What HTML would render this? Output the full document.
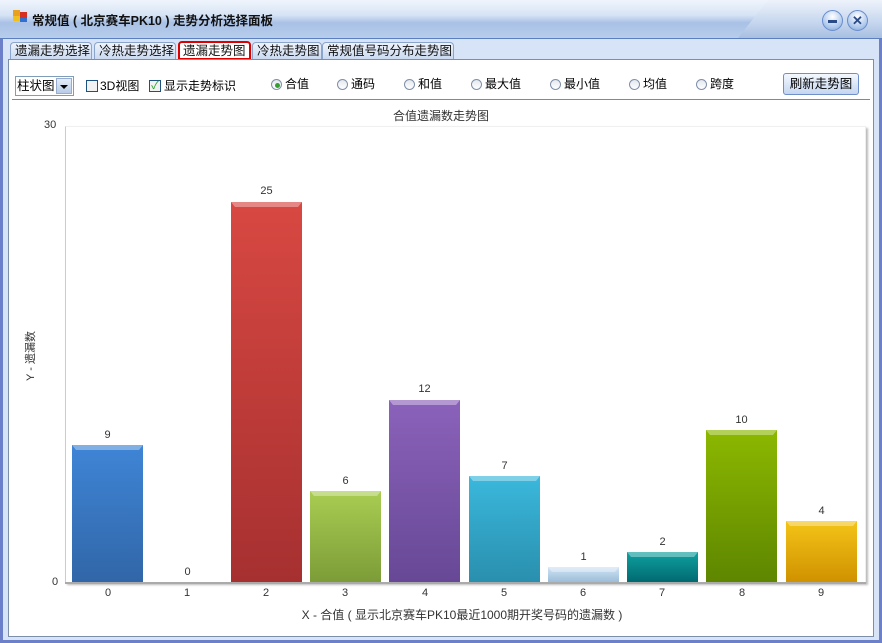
<!DOCTYPE html>
<html><head><meta charset="utf-8"><style>
*{margin:0;padding:0;box-sizing:border-box}
body{width:882px;height:643px;overflow:hidden;background:#d7e3f7;font-family:"Liberation Sans","Noto Sans CJK SC",sans-serif;font-size:12px;color:#000;position:relative}
.a{position:absolute;white-space:nowrap}
.frame{left:0;top:0;width:882px;height:643px;border:3px solid #6b80c8;border-top:none}
.title{left:0;top:0;width:882px;height:39px;background:linear-gradient(#f0f5fc 0%,#d6e3f5 40%,#a9c1e6 60%,#b7cdec 100%);border-bottom:1px solid #5c7fbf}
.tab{top:42px;height:18px;border:1px solid #8aa4cc;border-bottom:none;border-radius:4px 4px 0 0;background:linear-gradient(#eef3fb,#c8d8f0);font-size:12.5px;line-height:16px;padding:0 0 0 4px;color:#111;overflow:visible}
.panel{left:8px;top:59px;width:866px;height:578px;background:#fff;border:1px solid #7c8ea8}
.rad{width:11px;height:11px;border:1px solid #7f8fa8;border-radius:50%;background:linear-gradient(#e4e8ee,#fff)}
.lbl{font-size:12px;line-height:14px}
.bar{bottom:61px;width:71px}
.bar:before{content:"";position:absolute;left:0;top:0;right:0;height:5px;background:rgba(255,255,255,.35);clip-path:polygon(0 0,100% 0,calc(100% - 4px) 100%,4px 100%)}
.v{font-size:11px;width:71px;text-align:center;color:#333}
.xl{top:587px;font-size:11px;width:20px;text-align:center;color:#333}
</style></head><body>
<div class="a frame"></div>
<div class="a title"></div>
<div class="a" style="left:13px;top:10px;width:7px;height:6px;background:#e8a020"></div>
<div class="a" style="left:20px;top:12px;width:7px;height:6px;background:#d83020"></div>
<div class="a" style="left:13px;top:16px;width:7px;height:5px;background:#f0c020"></div>
<div class="a" style="left:20px;top:18px;width:7px;height:4px;background:#3070d0"></div>
<div class="a" style="left:32px;top:10px;font-size:12.5px;font-weight:bold;color:#111">常规值 ( 北京赛车PK10 ) 走势分析选择面板</div>
<div class="a" style="left:738px;top:0;width:144px;height:38px;background:linear-gradient(#eef3fb,#c5d6ee 60%,#a8bfe2);clip-path:polygon(30px 0,100% 0,100% 100%,0 100%)"></div>
<div class="a" style="left:822px;top:10px;width:21px;height:21px;border-radius:50%;border:1px solid #6a8ccc;background:radial-gradient(circle at 50% 30%,#fff,#a8c4ea 70%,#6f96d4)"></div>
<div class="a" style="left:828px;top:20px;width:9px;height:3px;background:#2a4a88"></div>
<div class="a" style="left:847px;top:10px;width:21px;height:21px;border-radius:50%;border:1px solid #6a8ccc;background:radial-gradient(circle at 50% 30%,#fff,#a8c4ea 70%,#6f96d4);font-size:13px;font-weight:bold;color:#2a4a88;text-align:center;line-height:19px">✕</div>
<div class="a tab" style="left:10px;width:82px">遗漏走势选择</div>
<div class="a tab" style="left:94px;width:82px">冷热走势选择</div>
<div class="a tab" style="left:178px;top:41px;width:73px;height:19px;background:#fff;border:2px solid #d00;padding-left:3px">遗漏走势图</div>
<div class="a tab" style="left:252px;width:70px">冷热走势图</div>
<div class="a tab" style="left:322px;width:132px">常规值号码分布走势图</div>
<div class="a panel"></div>
<div class="a" style="left:15px;top:76px;width:59px;height:20px;border:1px solid #7f9db9;background:#fff"></div>
<div class="a lbl" style="left:17px;top:79px;font-size:12.5px">柱状图</div>
<div class="a" style="left:56px;top:78px;width:16px;height:16px;background:linear-gradient(#e4ecf8,#b8cbe8);border:1px solid #98acd0"></div>
<div class="a" style="left:60px;top:85px;border:4px solid transparent;border-top:4px solid #000;border-bottom:none"></div>
<div class="a" style="left:86px;top:80px;width:12px;height:12px;border:1px solid #1c5180;background:#f2f2f2"></div>
<div class="a lbl" style="left:100px;top:79px">3D视图</div>
<div class="a" style="left:149px;top:80px;width:12px;height:12px;border:1px solid #1c5180;background:#f2f2f2;color:#21a121;font-size:11px;line-height:10px;text-align:center">✓</div>
<div class="a lbl" style="left:164px;top:79px">显示走势标识</div>
<div class="a rad" style="left:271px;top:79px"></div><div class="a" style="left:275px;top:83px;width:5px;height:5px;border-radius:50%;background:#31a031"></div><div class="a lbl" style="left:285px;top:77px">合值</div>
<div class="a rad" style="left:337px;top:79px"></div><div class="a lbl" style="left:351px;top:77px">通码</div>
<div class="a rad" style="left:404px;top:79px"></div><div class="a lbl" style="left:418px;top:77px">和值</div>
<div class="a rad" style="left:471px;top:79px"></div><div class="a lbl" style="left:485px;top:77px">最大值</div>
<div class="a rad" style="left:550px;top:79px"></div><div class="a lbl" style="left:564px;top:77px">最小值</div>
<div class="a rad" style="left:629px;top:79px"></div><div class="a lbl" style="left:643px;top:77px">均值</div>
<div class="a rad" style="left:696px;top:79px"></div><div class="a lbl" style="left:710px;top:77px">跨度</div>
<div class="a" style="left:783px;top:73px;width:76px;height:22px;border:1px solid #6f8fc8;border-radius:3px;background:linear-gradient(#f4f8fe,#c4d6f0);font-size:12.5px;text-align:center;line-height:20px">刷新走势图</div>
<div class="a" style="left:12px;top:99px;width:858px;height:1px;background:#888"></div>
<div class="a" style="left:0;top:107px;width:882px;text-align:center;font-size:12px;color:#333">合值遗漏数走势图</div>
<div class="a" style="left:65px;top:126px;width:801px;height:457px;border-left:1px solid #ccc;border-top:1px solid #f0f0f0;border-right:1px solid #eee;box-shadow:2px 2px 2px #bbb"></div>
<div class="a" style="left:65px;top:582px;width:801px;height:2px;background:#aaa"></div>
<div class="a" style="left:44px;top:119px;font-size:11px;color:#333">30</div>
<div class="a" style="left:52px;top:576px;font-size:11px;color:#333">0</div>
<div class="a" style="left:-10px;top:348px;width:80px;text-align:center;transform:rotate(-90deg);font-size:11px;color:#333">Y - 遗漏数</div>
<div class="a" style="left:0;top:606px;width:924px;text-align:center;font-size:12px;color:#333">X - 合值 ( 显示北京赛车PK10最近1000期开奖号码的遗漏数 )</div>

<div class="a bar" style="left:72px;height:137px;background:linear-gradient(#3f85d6,#3166a8)"></div>
<div class="a bar" style="left:231px;height:380px;background:linear-gradient(#d84842,#a63030)"></div>
<div class="a bar" style="left:310px;height:91px;background:linear-gradient(#a9cd52,#7c9c38)"></div>
<div class="a bar" style="left:389px;height:182px;background:linear-gradient(#8b62ba,#674896)"></div>
<div class="a bar" style="left:469px;height:106px;background:linear-gradient(#3ab8dc,#2a8fae)"></div>
<div class="a bar" style="left:548px;height:15px;background:linear-gradient(#d0e4f4,#9cbcd8)"></div>
<div class="a bar" style="left:627px;height:30px;background:linear-gradient(#10a0a0,#006a70)"></div>
<div class="a bar" style="left:706px;height:152px;background:linear-gradient(#8cb800,#5e8600)"></div>
<div class="a bar" style="left:786px;height:61px;background:linear-gradient(#f4c418,#d09200)"></div>

<div class="a v" style="left:72px;top:429px">9</div>
<div class="a v" style="left:152px;top:566px">0</div>
<div class="a v" style="left:231px;top:185px">25</div>
<div class="a v" style="left:310px;top:475px">6</div>
<div class="a v" style="left:389px;top:383px">12</div>
<div class="a v" style="left:469px;top:460px">7</div>
<div class="a v" style="left:548px;top:551px">1</div>
<div class="a v" style="left:627px;top:536px">2</div>
<div class="a v" style="left:706px;top:414px">10</div>
<div class="a v" style="left:786px;top:505px">4</div>

<div class="a xl" style="left:98px">0</div>
<div class="a xl" style="left:177px">1</div>
<div class="a xl" style="left:256px">2</div>
<div class="a xl" style="left:335px">3</div>
<div class="a xl" style="left:415px">4</div>
<div class="a xl" style="left:494px">5</div>
<div class="a xl" style="left:573px">6</div>
<div class="a xl" style="left:652px">7</div>
<div class="a xl" style="left:732px">8</div>
<div class="a xl" style="left:811px">9</div>
</body></html>
